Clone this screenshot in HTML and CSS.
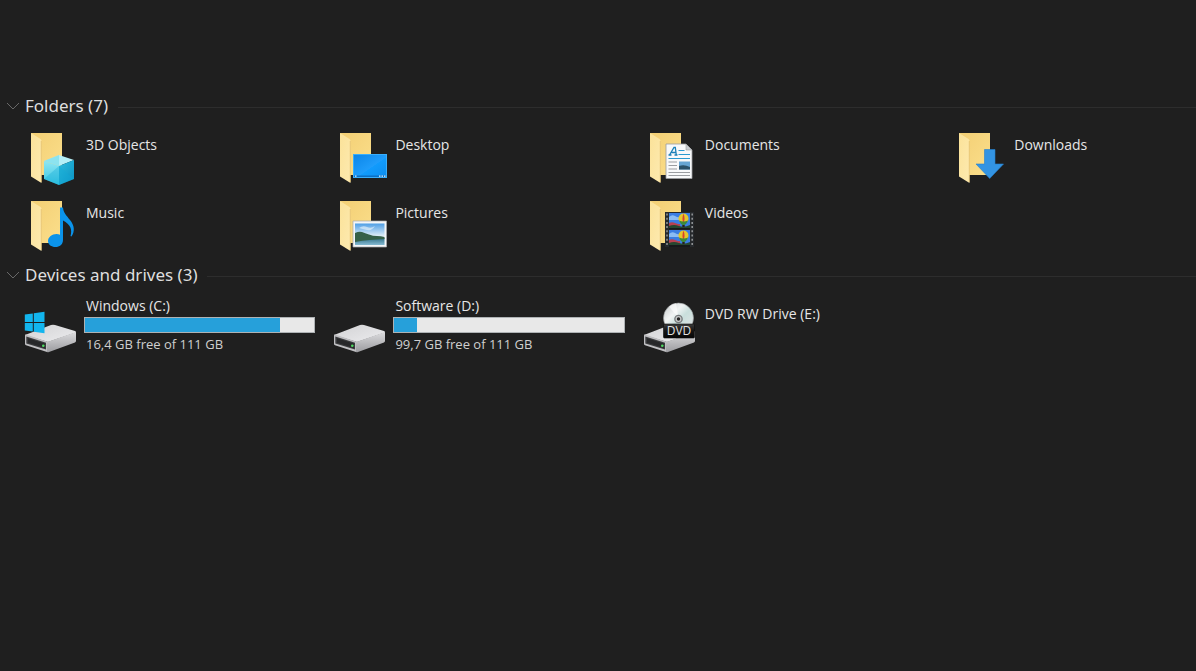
FILE: index.html
```html
<!DOCTYPE html>
<html lang="en">
<head>
<meta charset="utf-8">
<meta name="viewport" content="width=device-width, initial-scale=1">
<title>This PC</title>
<link rel="stylesheet" href="styles.css">
</head>
<body>
<svg class="defs" aria-hidden="true">
  <defs>
    <linearGradient id="back" x1="0" y1="0" x2="1" y2="1"><stop offset="0" stop-color="#f3cf74"/><stop offset="1" stop-color="#fbdf8c"/></linearGradient>
    <linearGradient id="flap" x1="0" y1="0" x2="1" y2="1"><stop offset="0" stop-color="#fbe299"/><stop offset="1" stop-color="#fdeab0"/></linearGradient>
    <linearGradient id="screen" x1="0" y1="0" x2="1" y2="1"><stop offset="0" stop-color="#0d86e8"/><stop offset=".55" stop-color="#1f9dfb"/><stop offset=".56" stop-color="#119bfc"/><stop offset="1" stop-color="#0c8df0"/></linearGradient>
    <linearGradient id="cubeL" x1="0" y1="0" x2="0" y2="1"><stop offset="0" stop-color="#8fe6f3"/><stop offset="1" stop-color="#37c6e2"/></linearGradient>
    <linearGradient id="cubeR" x1="0" y1="0" x2="1" y2="1"><stop offset="0" stop-color="#2dbbdc"/><stop offset="1" stop-color="#0a93c4"/></linearGradient>
    <linearGradient id="sky" x1="0" y1="0" x2="0" y2="1"><stop offset="0" stop-color="#4f9fe6"/><stop offset=".6" stop-color="#e4f0f7"/></linearGradient>
    <linearGradient id="water" x1="0" y1="0" x2="0" y2="1"><stop offset="0" stop-color="#2f6f86"/><stop offset="1" stop-color="#86bad2"/></linearGradient>
    <linearGradient id="top" x1="0" y1="0" x2="1" y2="1"><stop offset="0" stop-color="#d2d2d4"/><stop offset="1" stop-color="#ececee"/></linearGradient>
    <linearGradient id="side" x1="0" y1="0" x2="0" y2="1"><stop offset="0" stop-color="#dcdcde"/><stop offset="1" stop-color="#9b9b9f"/></linearGradient>
    <linearGradient id="disc" x1="0" y1="0" x2="1" y2="1"><stop offset="0" stop-color="#c3c7c9"/><stop offset=".35" stop-color="#f1f4f4"/><stop offset=".55" stop-color="#c9dfdc"/><stop offset="1" stop-color="#e6e6e8"/></linearGradient>
    <linearGradient id="plate" x1="0" y1="0" x2="0" y2="1"><stop offset="0" stop-color="#3c3c3c"/><stop offset=".5" stop-color="#141414"/><stop offset="1" stop-color="#050505"/></linearGradient>
    <g id="folder">
      <path d="M7 6H38V48H16z" fill="url(#back)"/>
      <path d="M7 6l9.500 6q1 .8 1 2V56L7 49.500z" fill="url(#flap)"/>
      <path d="M17.300 14V55" stroke="#e3bd68" stroke-width=".7"/>
    </g>
    <g id="drive">
      <path d="M1 39L27 29q2-.5 4 0L51 35q1 .4 1 1.500L24 46z" fill="url(#top)"/>
      <path d="M23 46L52 36V45q0 1-1 1.400L25 56q-1 .4-2 0z" fill="url(#side)"/>
      <path d="M1 39.500q0-1.300 1.200-1L23 45.500V56L2 49.300q-1-.3-1-1.300z" fill="#bfbfc2"/>
      <path d="M2.300 40.600L22 46.800V53.600L2.300 47.600z" fill="#3a3b3d"/>
      <path d="M4 42.300L21 47.800V52L4 46.700z" fill="#27282a"/>
      <circle cx="19.300" cy="49.800" r="1.300" fill="#4fdc62"/>
    </g>
    <g id="frame">
      <path d="M0 0H21V15H0z" fill="#3b7de2"/>
      <path d="M0 4q3-3 6-1t5 1v3H0z" fill="#8bbcf3"/>
      <path d="M0 10q3-1.500 6 0t5 1v4H0z" fill="#b8404f"/>
      <path d="M0 13q5-2 10 0t11-1v3H0z" fill="#27472f"/>
      <ellipse cx="14.500" cy="5.500" rx="5" ry="5" fill="#e6c62b"/>
      <path d="M14.500 .5q-2 5 0 10q2-5 0-10z" fill="#d8402e"/>
      <path d="M10 7.500q1.500 4 4.500 5 3-1 4.500-5-4.500 2-9 0z" fill="#3b8a3a"/>
      <path d="M13.300 12h2.400v2h-2.400z" fill="#2b211a"/>
    </g>
  </defs>
</svg>
<main class="explorer">
  <section class="group">
    <h2 class="group-title"><button class="toggle" type="button" aria-expanded="true"><svg class="chevron" viewBox="0 0 14 10" aria-hidden="true"><path d="M1 2l6 6 6-6"/></svg>Folders (7)</button></h2>
    <div class="tiles">
      <a class="tile" href="#objects"><svg class="icon" viewBox="0 0 60 60" aria-hidden="true"><use href="#folder"/>
        <path d="M35 28L50 33 35 39 20 34z" fill="#b4eff7"/><path d="M20 34l15 5V58L20 52z" fill="url(#cubeL)"/><path d="M50 33L35 39V58l15-6z" fill="url(#cubeR)"/><path d="M20 52L35 39 50 52 35 58z" fill="#12a9d6" opacity=".35"/><path d="M20 34L35 28V39z" fill="#6bd8ea" opacity=".55"/></svg><span class="name">3D Objects</span></a>
      <a class="tile" href="#desktop"><svg class="icon" viewBox="0 0 60 60" aria-hidden="true"><use href="#folder"/>
        <path d="M20 27H54V51H20z" fill="#38aefc"/><path d="M21 28H53V50H21z" fill="url(#screen)"/><path d="M21 48.500H53V50H21z" fill="#0b6fc4"/><path d="M22 49.200h1.500M46 49.200h1.500M48.500 49.200h1.500M51 49.200h1.500" stroke="#e8f6ff" stroke-width="1.200"/></svg><span class="name">Desktop</span></a>
      <a class="tile" href="#documents"><svg class="icon" viewBox="0 0 60 60" aria-hidden="true"><use href="#folder"/>
        <path d="M23 17H43l6 6V51.500H23z" fill="#f8f9fa" stroke="#9b9da0" stroke-width=".8"/><path d="M43 17v6h6z" fill="#c9ccd0" stroke="#9b9da0" stroke-width=".6"/>
        <path d="M26.500 28L31 20.500h1.300L33.300 28M28.500 25.500h4.500M25.500 28h3M31.500 28h3" fill="none" stroke="#1b80b8" stroke-width="1.300"/>
        <path d="M35.500 23.500h6M35.500 27.500H47M25.500 31.500H47" stroke="#2a9ad0" stroke-width="1.200"/>
        <path d="M25.500 35H34M25.500 38.500H34M25.500 42H34M25.500 45.500H47M25.500 48.500H47" stroke="#9a9da1"/>
        <path d="M36 34.500H47v8H36z" fill="#65a5d4"/><path d="M36 39q5-2 11 1v2.500H36z" fill="#29516a"/></svg><span class="name">Documents</span></a>
      <a class="tile" href="#downloads"><svg class="icon" viewBox="0 0 60 60" aria-hidden="true"><use href="#folder"/>
        <path d="M32.500 22.500H43V37h8.500L37.700 51.500 24 37h8.500z" fill="#3394e3" stroke="#2580cc" stroke-width=".6"/></svg><span class="name">Downloads</span></a>
      <a class="tile" href="#music"><svg class="icon" viewBox="0 0 60 60" aria-hidden="true"><use href="#folder"/>
        <path d="M36 12.500h3c.3 5 3.500 8 7 12.500 4.500 5.700 5 11 1.500 16.500l-1-.5c2-6.500 0-11.500-7.500-15.500V45c0 4.500-3.500 7-7.500 7s-7.500-2.300-7.500-6 4-7 8.500-7c1.400 0 2.500.2 3.500.7z" fill="#0b93ea"/></svg><span class="name">Music</span></a>
      <a class="tile" href="#pictures"><svg class="icon" viewBox="0 0 60 60" aria-hidden="true"><use href="#folder"/>
        <path d="M20 26H53.500V52H20z" fill="#f5f6f7" stroke="#a8abae" stroke-width=".7"/><path d="M22 28.500H51.500V50H22z" fill="url(#sky)"/><path d="M22 43H51.500V50H22z" fill="url(#water)"/><path d="M22 38q4-2 7-1t7 2.500 8 1.500 7.500 1V44q-8 .5-15 1t-14.500 2z" fill="#356048"/><path d="M26 33q4-3 8-1t8-1q-3 5-8 4t-8-2z" fill="#eef7fc" opacity=".6"/></svg><span class="name">Pictures</span></a>
      <a class="tile" href="#videos"><svg class="icon" viewBox="0 0 60 60" aria-hidden="true"><use href="#folder"/>
        <path d="M22 17H51V52H22z" fill="#26292c"/><use href="#frame" x="26" y="18"/><use href="#frame" x="26" y="35"/><path d="M26 50H47v2H26zM26 33H47v1.500H26z" fill="#17191b"/>
        <path d="M24 18.500V51M49.200 18.500V51" stroke="#8d9092" stroke-width="1.600" stroke-dasharray="2 2.200"/></svg><span class="name">Videos</span></a>
    </div>
  </section>
  <section class="group">
    <h2 class="group-title"><button class="toggle" type="button" aria-expanded="true"><svg class="chevron" viewBox="0 0 14 10" aria-hidden="true"><path d="M1 2l6 6 6-6"/></svg>Devices and drives (3)</button></h2>
    <div class="tiles">
      <a class="tile" href="#c"><svg class="icon" viewBox="0 0 60 60" aria-hidden="true"><use href="#drive"/>
        <path d="M.8 18.500L8.800 17.400V26H.8zM9.800 17.200L20.500 15.700V26H9.800zM.8 27H8.800V35.600L.8 34.500zM9.800 27H20.500V37.300L9.800 35.800z" fill="#12b5ee"/></svg>
        <span class="drive"><label class="label" for="use-c">Windows (C:)</label><progress class="usage" id="use-c" max="100" value="85"></progress><span class="free">16,4 GB free of 111 GB</span></span></a>
      <a class="tile" href="#d"><svg class="icon" viewBox="0 0 60 60" aria-hidden="true"><use href="#drive"/></svg>
        <span class="drive"><label class="label" for="use-d">Software (D:)</label><progress class="usage" id="use-d" max="100" value="10"></progress><span class="free">99,7 GB free of 111 GB</span></span></a>
      <a class="tile" href="#e"><svg class="icon" viewBox="0 0 60 60" aria-hidden="true"><use href="#drive"/>
        <circle cx="35.500" cy="22" r="15" fill="url(#disc)" stroke="#9a9da0" stroke-width=".6"/><path d="M35.500 22L26 10.500A15 15 0 0 1 33 7.300z" fill="#fff" opacity=".6"/><circle cx="35.500" cy="23" r="4.300" fill="#75797b"/><circle cx="35.500" cy="23" r="3" fill="#c8caca"/><circle cx="35.500" cy="23" r="1.700" fill="#242424"/>
        <rect x="20.500" y="28" width="31" height="14" rx="1" fill="url(#plate)" stroke="#0a0a0a" stroke-width=".6"/><text class="plate-text" x="36" y="39" text-anchor="middle">DVD</text></svg><span class="name">DVD RW Drive (E:)</span></a>
    </div>
  </section>
</main>
</body>
</html>
```
FILE: styles.css
```css
* { box-sizing: border-box; }
body {
  margin: 0;
  background: #1f1f1f;
  color: #e6e6e6;
  font: 14px/18px "Open Sans", "Noto Sans", sans-serif;
}
.defs { position: absolute; width: 0; height: 0; }
.explorer {
  display: flex;
  flex-direction: column;
  gap: 8px;
  padding-top: 94px;
}
.group-title {
  display: flex;
  align-items: center;
  gap: 10px;
  margin: 0;
  padding-left: 6px;
}
.group-title::after {
  content: "";
  flex: 1;
  height: 1px;
  margin-top: 2px;
  background: #2d2d2d;
}
.toggle {
  display: flex;
  align-items: center;
  gap: 5px;
  padding: 0;
  border: 0;
  background: none;
  color: #dedede;
  font: 17px/24px "Noto Sans", "Open Sans", sans-serif;
  white-space: nowrap;
}
.chevron {
  width: 14px;
  height: 10px;
  fill: none;
  stroke: #686868;
}
.tiles {
  display: grid;
  grid-template-columns: repeat(3, 26.4%) 1fr;
  row-gap: 8px;
  padding: 9px 0 0 24px;
}
.tile {
  display: flex;
  align-items: flex-start;
  padding-right: 18px;
  color: inherit;
  text-decoration: none;
}
.icon { flex: none; width: 60px; height: 60px; }
.name { padding: 9px 0 0 2px; }
.drive {
  display: flex;
  flex: 1;
  flex-direction: column;
  padding-top: 1px;
}
.label, .free { padding-left: 2px; }
.free {
  color: #cfcfcf;
  font-size: 13px;
}
.usage {
  appearance: none;
  display: block;
  width: 100%;
  height: 16px;
  margin: 2px 0;
  border: 1px solid #aeb2b4;
  background: #e8e8e8;
}
.usage::-webkit-progress-bar { background: #e8e8e8; }
.usage::-webkit-progress-value { background: #26a0da; }
.usage::-moz-progress-bar { background: #26a0da; }
.plate-text {
  fill: #e2e2e2;
  font: 12px "Open Sans", "Noto Sans", sans-serif;
}
```
